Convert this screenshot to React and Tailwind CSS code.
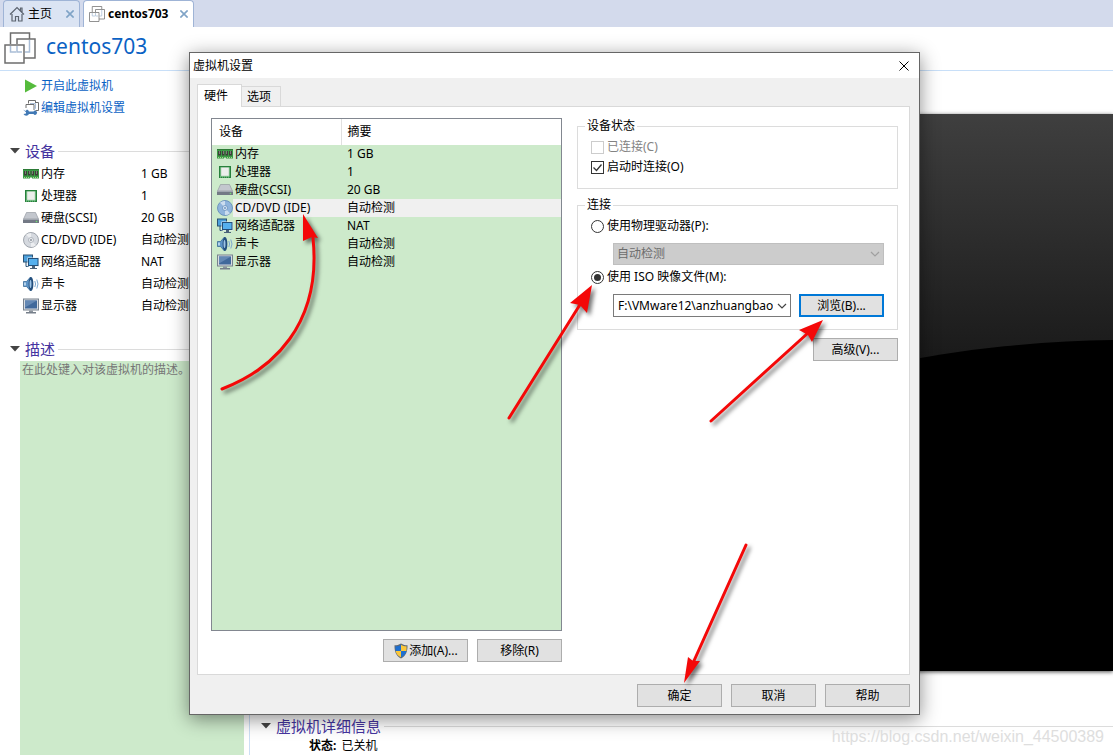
import React from 'react';
import clsx from 'clsx';

const MemoryIcon = () => (
  <svg viewBox="0 0 16 16" className="h-4 w-4 shrink-0">
    <path d="M0 3h16v9.500H9v-1H7v1H0z" fill="#3a9a45" />
    <path d="M0 3h16v1H0z" fill="#2c7a36" />
    <path d="M1 5h3v4.500H1zM5 5h2.500v4.500H5zM8.500 5H11v4.500H8.500zM12 5h3v4.500h-3z" fill="#3c4038" />
    <path d="M2 5h1v3H2zM6 5h1v3H6zM9 5h1v3H9zM13 5h1v3h-1z" fill="#7b7f78" />
    <path d="M1 11h1v1H1zM3 11h1v1H3zM5 11h1v1H5zM10 11h1v1h-1zM12 11h1v1h-1zM14 11h1v1h-1z" fill="#a5d690" />
  </svg>
);

const CpuIcon = () => (
  <svg viewBox="0 0 16 16" className="h-4 w-4 shrink-0">
    <rect x="2.500" y="2.500" width="11" height="11" fill="#4fa863" stroke="#27803c" />
    <rect x="4" y="3.500" width="8" height="8.500" rx=".5" fill="#eceeec" stroke="#a9c9ad" strokeWidth=".6" />
    <path d="M3 13h10" stroke="#8fd09b" strokeDasharray="1 1" />
  </svg>
);

const DiskIcon = () => (
  <svg viewBox="0 0 16 16" className="h-4 w-4 shrink-0">
    <path d="M3.500 2.500h9L15.500 9H.5z" fill="#c3c7ce" stroke="#8b9099" strokeWidth=".6" />
    <path d="M0 9h16v4H0z" fill="#737985" />
    <path d="M0 9h16v1H0z" fill="#a0a6af" />
    <circle cx="13.500" cy="11.500" r=".8" fill="#6fe06f" />
  </svg>
);

const DiscIcon = ({ blue = false }) => (
  <svg viewBox="0 0 16 16" className="h-4 w-4 shrink-0">
    <circle cx="8" cy="8" r="7.500" fill={blue ? '#8fb4dc' : '#d5d9df'} stroke={blue ? '#5d87b8' : '#8d939c'} strokeWidth=".8" />
    <path d="M8 8 3 2.500A7 7 0 0 1 8 1zM8 8l5 5.500A7 7 0 0 1 8 15z" fill="#fff" opacity=".55" />
    <circle cx="8" cy="8" r="2.500" fill={blue ? '#d9e7f5' : '#eef0f3'} stroke={blue ? '#5d87b8' : '#9ea4ad'} strokeWidth=".7" />
    <circle cx="8" cy="8" r="1" fill={blue ? '#6d94c0' : '#8d939c'} />
  </svg>
);

const NetworkIcon = () => (
  <svg viewBox="0 0 16 16" className="h-4 w-4 shrink-0">
    <rect x=".5" y="1" width="9" height="7" fill="#4ca0dc" stroke="#2a5275" />
    <path d="M3 8v4.500h3" fill="none" stroke="#2a5275" />
    <rect x="4.500" y="3.500" width="11.500" height="9" fill="#e6eef5" />
    <rect x="5.500" y="4.500" width="9.500" height="7" fill="#55b0ee" stroke="#24507a" />
    <path d="M9 12h3v2H9zM7 14h7v1H7z" fill="#49627a" />
  </svg>
);

const SoundIcon = () => (
  <svg viewBox="0 0 16 16" className="h-4 w-4 shrink-0">
    <path d="M.5 5.500h3L7.500 1v14l-4-4.500h-3z" fill="#5c93c6" stroke="#2d608f" strokeWidth=".7" />
    <path d="M1 6.500h2v3H1z" fill="#b3d2ec" />
    <ellipse cx="8" cy="8" rx="2.400" ry="7" fill="#234f7d" />
    <ellipse cx="7.500" cy="8" rx="1" ry="4" fill="#9cc3e6" />
    <path d="M11.800 5q1.600 3 0 6M13.800 3.500q2.400 4.500 0 9" fill="none" stroke="#7da8cf" strokeWidth="1" />
  </svg>
);

const DisplayIcon = () => (
  <svg viewBox="0 0 16 16" className="h-4 w-4 shrink-0">
    <rect x=".5" y="1" width="15" height="11" fill="#d9dde2" stroke="#78828e" />
    <rect x="2" y="2.500" width="12" height="8" fill="#41699b" />
    <path d="M2 2.500h12l-12 7z" fill="#6488b4" />
    <path d="M6 12.500h4V14H6z" fill="#8b939d" />
    <path d="M3 14h10v1.500H3z" fill="#767f8a" />
  </svg>
);

const VmIcon = ({ className }) => (
  <svg viewBox="0 0 32 32" fill="none" strokeWidth="1.500" className={className}>
    <path d="M6.500 12V1h19v6M25.500 7H31v19H20M13 12V7h12.500" stroke="#6e6e6e" />
    <path d="M6.500 14v6H12M13 14v6h5M25.500 8v12H21" stroke="#a9bdd6" />
    <path d="M1 13h19v18H1z" stroke="#6e6e6e" />
  </svg>
);

const HomeIcon = () => (
  <svg viewBox="0 0 16 16" fill="none" stroke="#5c6470" strokeWidth="1.200" className="h-4 w-4">
    <path d="m1 8.500 7-7 7 7M11.500 4.500V2h1.500v4.500M3 8v7h3.500v-4.500h3V15H13V8" />
  </svg>
);

const EditIcon = () => (
  <svg viewBox="0 0 16 16" fill="none" className="h-4 w-4 shrink-0">
    <path d="M5.500 3.500v-3h7v2.500M7.500 5V3.500M12.500 2.500h3v8h-3M3 8V4.500h8V10" stroke="#6e6e6e" />
    <path d="M7.500 3.500h5v5H11" stroke="#a9bdd6" />
    <path d="M0 9.500 2.500 11 4 9.500a3 3 0 0 1 2 2h4.500a2 2 0 1 1 0 2.500H6a3 3 0 0 1-5.500 0L3 13.500v-1.300z" fill="#4179b5" />
  </svg>
);

const ShieldIcon = () => (
  <svg viewBox="0 0 16 16" className="h-4 w-4 shrink-0">
    <path d="M8 .5c2 1.300 4.300 1.800 6.500 1.800C14.700 8.500 13 13 8 15.500 3 13 1.300 8.500 1.500 2.300 3.700 2.300 6 1.800 8 .5z" fill="#606a76" />
    <path d="M8 1.700V8H2.600C2.400 6.500 2.400 5 2.500 3.300 4.500 3.200 6.300 2.700 8 1.700z" fill="#1d6fd1" />
    <path d="M8 1.700V8h5.400c.2-1.500.2-3 .1-4.700-2-.1-3.800-.6-5.500-1.600z" fill="#fbc73b" />
    <path d="M8 14.300V8H2.600C3.200 11 5 13 8 14.300z" fill="#fbc73b" />
    <path d="M8 14.300V8h5.400c-.6 3-2.400 5-5.400 6.300z" fill="#1d6fd1" />
  </svg>
);

const Chevron = ({ className }) => (
  <svg viewBox="0 0 10 6" fill="none" stroke="currentColor" strokeWidth="1.200" className={clsx('h-[6px] w-[10px]', className)}>
    <path d="m1 1 4 4 4-4" />
  </svg>
);

const Cross = ({ className, width = 1 }) => (
  <svg viewBox="0 0 10 10" fill="none" stroke="currentColor" strokeWidth={width} className={className}>
    <path d="m.5.5 9 9M9.500.5l-9 9" />
  </svg>
);

const devices = [
  { name: '内存', value: '1 GB', icon: MemoryIcon },
  { name: '处理器', value: '1', icon: CpuIcon },
  { name: '硬盘(SCSI)', value: '20 GB', icon: DiskIcon },
  { name: 'CD/DVD (IDE)', value: '自动检测', icon: DiscIcon, selected: true },
  { name: '网络适配器', value: 'NAT', icon: NetworkIcon },
  { name: '声卡', value: '自动检测', icon: SoundIcon },
  { name: '显示器', value: '自动检测', icon: DisplayIcon },
];

const SectionTitle = ({ children }) => (
  <h2 className="flex h-5 items-center text-[15px] leading-5 text-[#4534a0]">
    <svg viewBox="0 0 10 6" className="mr-[5px] h-[6px] w-[10px] shrink-0">
      <path d="M0 0h10L5 5.500z" fill="#444" />
    </svg>
    <span className="shrink-0">{children}</span>
    <span className="ml-[3px] h-px flex-1 bg-[#dcdcdc]" />
  </h2>
);

const Button = ({ children, focused = false }) => (
  <button
    type="button"
    className={clsx(
      'flex h-[23px] w-[85px] shrink-0 items-center justify-center bg-[#e1e1e1] leading-4',
      focused ? 'border-2 border-[#0078d7]' : 'border border-[#adadad]'
    )}
  >
    {children}
  </button>
);

const Checkbox = ({ id, label, checked = false, disabled = false }) => (
  <div className="flex h-5 items-center gap-[3px]">
    <span className="grid">
      <input
        id={id}
        type="checkbox"
        defaultChecked={checked}
        disabled={disabled}
        className="peer col-start-1 row-start-1 h-[13px] w-[13px] appearance-none border border-[#333] bg-white disabled:border-[#ccc]"
      />
      <svg
        viewBox="0 0 13 13"
        fill="none"
        stroke="#333"
        strokeWidth="1.300"
        className="pointer-events-none invisible col-start-1 row-start-1 h-[13px] w-[13px] peer-checked:visible"
      >
        <path d="m2.500 6.500 3 3 5-6" />
      </svg>
    </span>
    <label htmlFor={id} className={disabled ? 'text-[#838383]' : 'text-black'}>{label}</label>
  </div>
);

const Radio = ({ id, label, checked = false }) => (
  <div className="flex h-5 items-center gap-[3px]">
    <span className="grid place-items-center">
      <input
        id={id}
        type="radio"
        name="source"
        defaultChecked={checked}
        className="peer col-start-1 row-start-1 h-[13px] w-[13px] appearance-none rounded-full border border-[#333] bg-white"
      />
      <span className="pointer-events-none col-start-1 row-start-1 hidden h-[7px] w-[7px] rounded-full bg-[#333] peer-checked:block" />
    </span>
    <label htmlFor={id}>{label}</label>
  </div>
);

const TabBar = () => (
  <nav className="flex h-[27px] items-stretch bg-[#d3daec] pl-[3px]">
    <div className="flex w-[77px] items-center rounded-t border border-b-0 border-[#9fb4d6] bg-[#dbe4f3] px-[5px]">
      <HomeIcon />
      <a href="#home" className="ml-[3px] flex-1">主页</a>
      <button type="button" aria-label="关闭主页">
        <Cross className="h-2 w-2 text-[#7fa3c6]" width={2} />
      </button>
    </div>
    <div className="ml-[3px] flex w-[111px] items-center rounded-t border border-b-0 border-[#9fb4d6] bg-white px-[5px]">
      <VmIcon className="h-4 w-4" />
      <a href="#centos703" className="ml-[3px] flex-1 font-bold">centos703</a>
      <button type="button" aria-label="关闭 centos703">
        <Cross className="h-2 w-2 text-[#7fa3c6]" width={2} />
      </button>
    </div>
  </nav>
);

const Sidebar = () => (
  <aside className="flex w-[250px] shrink-0 flex-col border-r border-[#ccdff5] pr-[5px]">
    <div className="flex flex-col pl-[23px] pt-[4px] text-[#0a62c4]">
      <a href="#start" className="flex h-[22px] items-center gap-[2px]">
        <svg viewBox="0 0 16 16" className="h-4 w-4">
          <path d="M2 1.500 14 8 2 14.500z" fill="#55bb3c" />
        </svg>
        开启此虚拟机
      </a>
      <a href="#edit" className="flex h-[22px] items-center gap-[2px]">
        <EditIcon />
        编辑虚拟机设置
      </a>
    </div>
    <div className="pl-[10px] pt-[22px]">
      <SectionTitle>设备</SectionTitle>
      <table className="mt-[2px] w-full table-fixed">
        <tbody>
          {devices.map(({ name, value, icon: Icon }) => (
            <tr key={name} className="h-[22px]">
              <td className="w-[131px] pl-[13px]">
                <span className="flex items-center gap-[2px]"><Icon />{name}</span>
              </td>
              <td>{value}</td>
            </tr>
          ))}
        </tbody>
      </table>
    </div>
    <div className="pl-[10px] pt-[22px]">
      <SectionTitle>描述</SectionTitle>
    </div>
    <textarea
      aria-label="描述"
      placeholder="在此处键入对该虚拟机的描述。"
      className="ml-[20px] mt-[2px] flex-1 resize-none bg-[#cdeacb] px-[2px] pt-px leading-4 placeholder:text-[#777]"
    />
  </aside>
);

const Details = () => (
  <main className="flex flex-1 flex-col pt-[43px]">
    <svg className="h-[557px] w-full shadow-[0_1px_4px_rgba(0,0,0,0.7)]">
      <defs>
        <linearGradient id="glass" x1="0" y1="0" x2="0" y2="1">
          <stop offset="0" stopColor="#3f3f3f" />
          <stop offset="0.45" stopColor="#191919" />
        </linearGradient>
      </defs>
      <rect width="100%" height="557" fill="url(#glass)" />
      <ellipse cx="880" cy="556" rx="645" ry="330" />
    </svg>
    <div className="pl-[11px] pt-[45px]">
      <SectionTitle>虚拟机详细信息</SectionTitle>
      <dl className="mt-px flex gap-[5px] pl-[48px] leading-[18px]">
        <dt className="font-bold">状态:</dt>
        <dd>已关机</dd>
      </dl>
    </div>
  </main>
);

const DeviceList = () => (
  <div className="h-[513px] border border-[#828790] bg-[#cdeacb]">
    <table className="w-full table-fixed">
      <thead>
        <tr className="h-[26px] bg-white text-left">
          <th className="w-[129px] border-r border-[#e0e0e0] pl-[7px] font-normal">设备</th>
          <th className="pl-[6px] font-normal">摘要</th>
        </tr>
      </thead>
      <tbody>
        {devices.map(({ name, value, icon: Icon, selected }) => (
          <tr key={name} className="h-[18px]">
            <td className="p-0 pl-[5px]">
              <span className="flex h-[18px] items-center">
                <Icon {...(selected && { blue: true })} />
                <span className={clsx('flex-1 pl-[2px] leading-[18px]', selected && 'bg-[#f0f0f0]')}>{name}</span>
              </span>
            </td>
            <td className={clsx('p-0 pl-[6px] leading-[18px]', selected && 'bg-[#f0f0f0]')}>{value}</td>
          </tr>
        ))}
      </tbody>
    </table>
  </div>
);

const SettingsDialog = () => (
  <section
    role="dialog"
    aria-label="虚拟机设置"
    className="absolute left-[189px] top-[52px] w-[731px] border border-[#666] bg-[#f0f0f0] shadow-[0_4px_18px_rgba(0,0,0,0.45)]"
  >
    <header className="flex h-[25px] items-center justify-between bg-white pl-[3px] pr-[10px]">
      <h1>虚拟机设置</h1>
      <button type="button" aria-label="关闭">
        <Cross className="h-[10px] w-[10px]" />
      </button>
    </header>
    <div className="pb-[7px] pl-[7px] pr-[9px] pt-[6px]">
      <div role="tablist" className="flex items-end">
        <button type="button" role="tab" aria-selected="true" className="z-10 -mb-px h-[23px] w-[45px] border border-b-0 border-[#d9d9d9] bg-white pl-[6px] text-left">
          硬件
        </button>
        <button type="button" role="tab" aria-selected="false" className="h-[20px] w-[39px] border border-b-0 border-l-0 border-[#d9d9d9] bg-[#f0f0f0] pl-[5px] text-left">
          选项
        </button>
      </div>
      <div className="flex gap-[15px] border border-[#d9d9d9] bg-white pb-[12px] pl-[13px] pr-[11px] pt-[11px]">
        <div className="w-[351px] shrink-0">
          <DeviceList />
          <div className="mt-[8px] flex justify-end gap-[9px]">
            <Button><ShieldIcon />添加(A)...</Button>
            <Button>移除(R)</Button>
          </div>
        </div>
        <div className="flex min-w-0 flex-1 flex-col">
          <fieldset className="h-[71px] min-w-0 border border-[#dcdcdc] pl-[13px] pt-[3px]">
            <legend className="-ml-[6px] px-[2px] leading-4">设备状态</legend>
            <Checkbox id="connected" label="已连接(C)" disabled />
            <Checkbox id="connect-on-start" label="启动时连接(O)" checked />
          </fieldset>
          <fieldset className="mt-[8px] h-[133px] min-w-0 border border-[#dcdcdc] px-[13px] pt-[3px]">
            <legend className="-ml-[6px] px-[2px] leading-4">连接</legend>
            <Radio id="physical" label="使用物理驱动器(P):" />
            <div className="ml-[22px] mt-[7px] grid items-center">
              <select disabled aria-label="物理驱动器" className="col-start-1 row-start-1 h-[22px] w-full appearance-none border border-[#bfbfbf] bg-[#ccc] pl-[3px] text-[#6d6d6d] opacity-100">
                <option>自动检测</option>
              </select>
              <Chevron className="pointer-events-none col-start-1 row-start-1 mr-[4px] justify-self-end text-[#a0a0a0]" />
            </div>
            <div className="mt-[2px]">
              <Radio id="iso" label="使用 ISO 映像文件(M):" checked />
            </div>
            <div className="ml-[22px] mt-[7px] flex items-center gap-[8px]">
              <div className="flex h-[23px] min-w-0 flex-1 items-center border border-[#7a7a7a] bg-white pl-[4px]">
                <input
                  aria-label="ISO 映像文件"
                  defaultValue="F:\VMware12\anzhuangbao\"
                  className="min-w-0 flex-1"
                />
                <button type="button" aria-label="展开" className="flex h-full w-[17px] shrink-0 items-center justify-center text-[#444]">
                  <Chevron />
                </button>
              </div>
              <Button focused>浏览(B)...</Button>
            </div>
          </fieldset>
          <div className="mt-[8px] flex justify-end">
            <Button>高级(V)...</Button>
          </div>
        </div>
      </div>
      <footer className="mt-[9px] flex justify-end gap-[9px]">
        <Button>确定</Button>
        <Button>取消</Button>
        <Button>帮助</Button>
      </footer>
    </div>
  </section>
);

const Arrows = () => (
  <svg
    width="1113"
    height="755"
    className="pointer-events-none absolute left-0 top-0 drop-shadow-[3px_3px_2px_rgba(0,0,0,0.55)]"
    fill="none"
    stroke="#f40808"
    strokeLinecap="round"
    strokeWidth="3"
  >
    <path d="M222 389C272 370 322 325 313 238" />
    <path d="M509 418 581 303M711 421 808 333M746 545 693 663" />
    <g fill="#f40808" stroke="none">
      <path d="m303 214 15 24-6-1-9 4z" />
      <path d="m592 285-5 28-7-8-10-2z" />
      <path d="m823 320-11 22-4-7-9-5z" />
      <path d="m684 683 4-26 5 4 7 0z" />
    </g>
  </svg>
);

const App = () => (
  <div className="relative flex min-h-screen flex-col overflow-hidden bg-white font-['Noto_Sans','Noto_Sans_CJK_SC',sans-serif] text-[12px] leading-4 text-black">
    <TabBar />
    <header className="flex h-[44px] items-start gap-[10px] border-b border-[#c8dff8] pl-[4px] pt-[4px]">
      <VmIcon className="mt-px h-8 w-8" />
      <span className="text-[21px] leading-[30px] text-[#0a62c4]">centos703</span>
    </header>
    <div className="flex flex-1">
      <Sidebar />
      <Details />
    </div>
    <SettingsDialog />
    <Arrows />
    <p className="absolute bottom-[8px] right-[9px] font-['Liberation_Sans',sans-serif] text-[16px] leading-5 text-[#dedede]">
      https://blog.csdn.net/weixin_44500389
    </p>
  </div>
);

export default App;
